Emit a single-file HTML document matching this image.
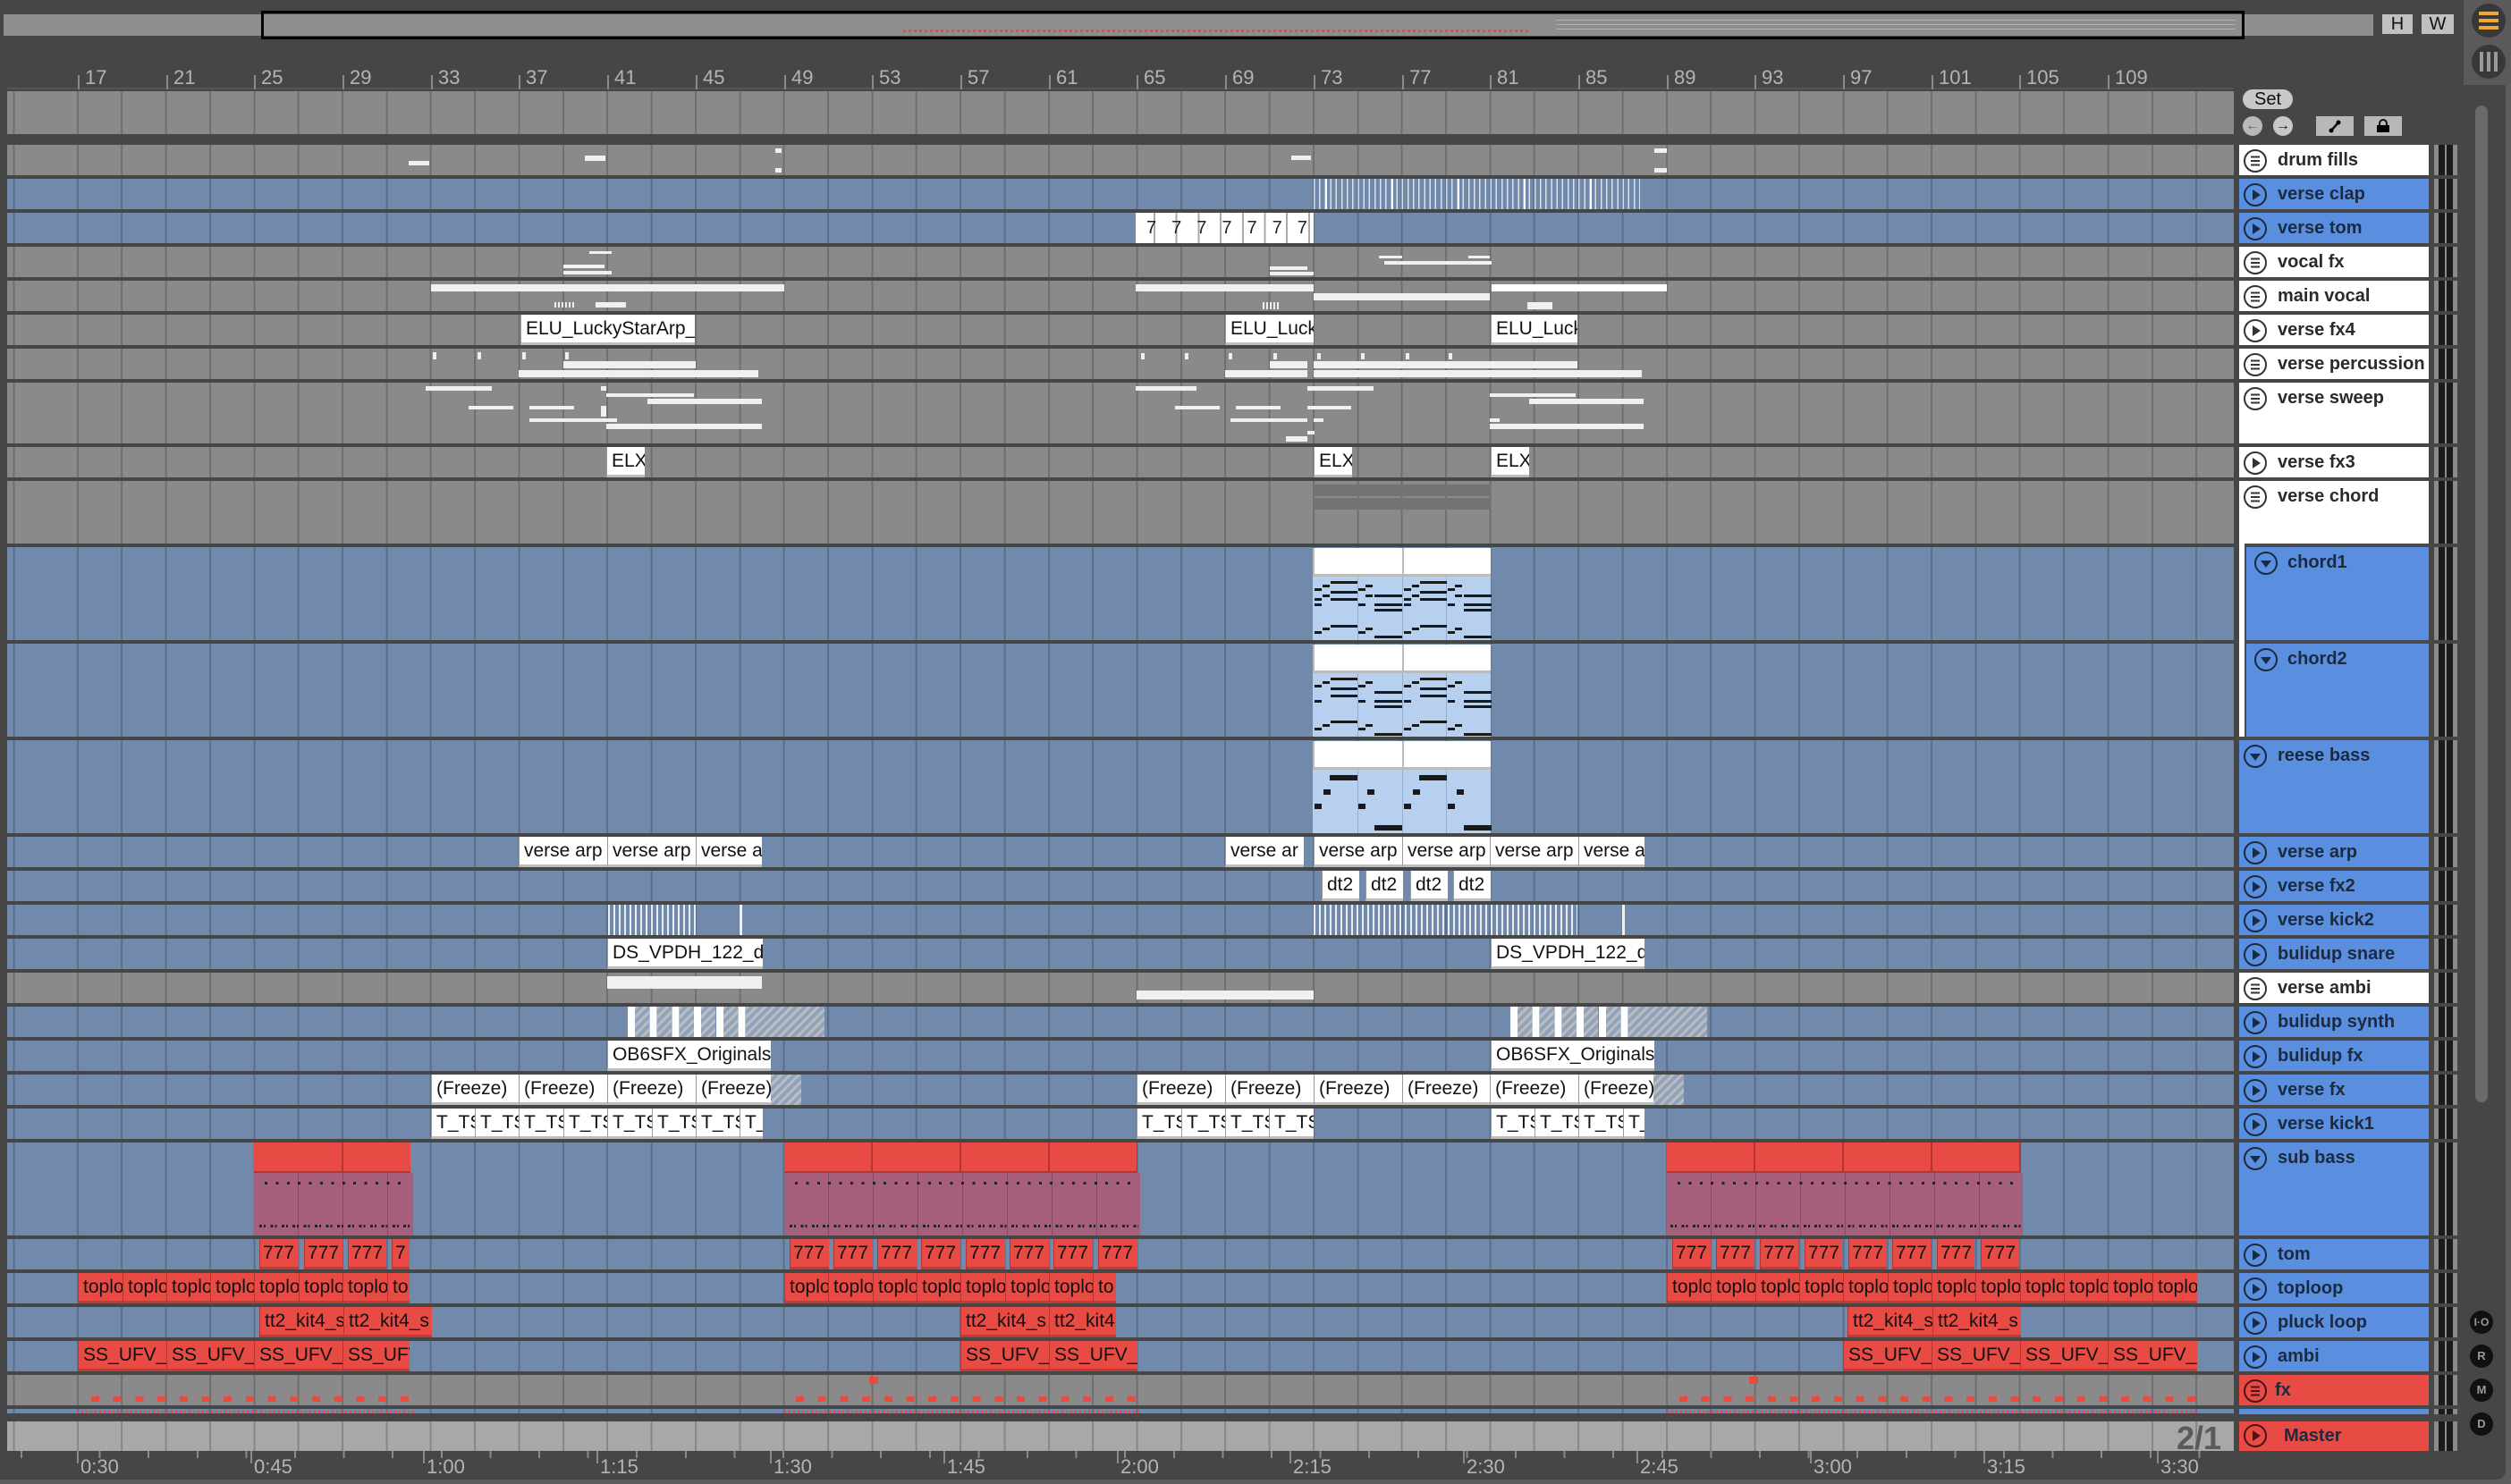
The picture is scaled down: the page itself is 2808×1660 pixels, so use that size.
<!DOCTYPE html>
<html><head><meta charset="utf-8">
<style>
*{margin:0;padding:0}
body{width:2808px;height:1660px;background:#5c5c5c;position:relative;overflow:hidden;font-family:"Liberation Sans",sans-serif}
div{position:absolute;box-sizing:border-box}
.l{left:8px;width:2490px;background-image:repeating-linear-gradient(90deg,transparent 0,transparent 47.36px,rgba(0,0,0,.2) 47.36px,rgba(0,0,0,.2) 49.36px);background-position:30.6px 0}
.g{background-color:#8a8a8a}
.b{background-color:#7189ab}
.c{overflow:hidden;white-space:nowrap;font-size:21px;color:#111;padding-left:5px;line-height:32px}
.w{background:#fff;border-left:1px solid #999;border-bottom:3px solid #bdbdbd}
.r{background:#e84a44;border-left:1px solid #b8342e;border-bottom:3px solid #c13a33}
.wb{background:#f0f0f0}
.h{left:2504px;width:212px;font-weight:bold;font-size:20px;color:#1c2a40}
.h svg{position:absolute;left:4px;top:4px}
.h span{position:absolute;left:43px;top:6px}
.hw{background:#fff;color:#2a2a2a}
.hb{background:#5a8fe0}
.hr{background:#e84a44}
.m{left:2722px;width:26px;background:#8a8a8a linear-gradient(90deg,transparent 0,transparent 5px,#1a1a1a 5px,#1a1a1a 12px,transparent 12px,transparent 14px,#1a1a1a 14px,#1a1a1a 21px,transparent 21px)}
.n{background:#1a1a1a;height:3px}
.rl{color:#b4b4b4;font-size:22px;top:74px}
.tk{width:2px;background:#8a8a8a}
.tl{color:#b4b4b4;font-size:22px;top:1628px}
.hat{background:repeating-linear-gradient(135deg,#bcbcbc 0,#bcbcbc 3px,#8fa3bf 3px,#8fa3bf 7px)}
</style></head><body>
<!-- main panel -->
<div style="left:0;top:0;width:2802px;height:1655px;background:#464646;border-radius:0 0 10px 0"></div>
<div style="left:2755px;top:0;width:53px;height:95px;background:#5a5a5a"></div>
<div style="left:2768px;top:118px;width:14px;height:1115px;background:#6a6a6a;border-radius:7px"></div>
<!-- overview bar -->
<div style="left:4px;top:16px;width:2650px;height:24px;background:#8e8e8e"></div>
<div style="left:292px;top:12px;width:2218px;height:32px;border:3px solid #000"></div>
<div style="left:1010px;top:33px;width:700px;height:3px;background:repeating-linear-gradient(90deg,#d25050 0,#d25050 3px,transparent 3px,transparent 6px)"></div>
<div style="left:1700px;top:18px;width:800px;height:18px;background:repeating-linear-gradient(180deg,transparent 0,transparent 4px,#c8c8c8 4px,#c8c8c8 5px);opacity:.6;left:1740px;width:760px"></div>
<div style="left:2664px;top:16px;width:34px;height:22px;background:#c0c0c0;font-size:20px;text-align:center;line-height:22px;color:#111">H</div>
<div style="left:2708px;top:16px;width:36px;height:22px;background:#c0c0c0;font-size:20px;text-align:center;line-height:22px;color:#111">W</div>
<div style="left:2764px;top:4px;width:38px;height:38px;border-radius:50%;background:#383838"></div>
<div style="left:2772px;top:13px;width:22px;height:4px;background:#f0a830;box-shadow:0 8px 0 #f0a830,0 16px 0 #f0a830"></div>
<div style="left:2764px;top:50px;width:38px;height:38px;border-radius:50%;background:#383838"></div>
<div style="left:2773px;top:58px;width:4px;height:22px;background:#999;box-shadow:8px 0 0 #999,16px 0 0 #999"></div>
<!-- ruler -->
<div style="left:8px;top:98px;width:2490px;height:2px;background:#555"></div>
<div class="tk" style="left:87px;top:84px;height:16px"></div><div class="rl" style="left:95px">17</div>
<div class="tk" style="left:186px;top:84px;height:16px"></div><div class="rl" style="left:194px">21</div>
<div class="tk" style="left:284px;top:84px;height:16px"></div><div class="rl" style="left:292px">25</div>
<div class="tk" style="left:383px;top:84px;height:16px"></div><div class="rl" style="left:391px">29</div>
<div class="tk" style="left:482px;top:84px;height:16px"></div><div class="rl" style="left:490px">33</div>
<div class="tk" style="left:580px;top:84px;height:16px"></div><div class="rl" style="left:588px">37</div>
<div class="tk" style="left:679px;top:84px;height:16px"></div><div class="rl" style="left:687px">41</div>
<div class="tk" style="left:778px;top:84px;height:16px"></div><div class="rl" style="left:786px">45</div>
<div class="tk" style="left:877px;top:84px;height:16px"></div><div class="rl" style="left:885px">49</div>
<div class="tk" style="left:975px;top:84px;height:16px"></div><div class="rl" style="left:983px">53</div>
<div class="tk" style="left:1074px;top:84px;height:16px"></div><div class="rl" style="left:1082px">57</div>
<div class="tk" style="left:1173px;top:84px;height:16px"></div><div class="rl" style="left:1181px">61</div>
<div class="tk" style="left:1271px;top:84px;height:16px"></div><div class="rl" style="left:1279px">65</div>
<div class="tk" style="left:1370px;top:84px;height:16px"></div><div class="rl" style="left:1378px">69</div>
<div class="tk" style="left:1469px;top:84px;height:16px"></div><div class="rl" style="left:1477px">73</div>
<div class="tk" style="left:1568px;top:84px;height:16px"></div><div class="rl" style="left:1576px">77</div>
<div class="tk" style="left:1666px;top:84px;height:16px"></div><div class="rl" style="left:1674px">81</div>
<div class="tk" style="left:1765px;top:84px;height:16px"></div><div class="rl" style="left:1773px">85</div>
<div class="tk" style="left:1864px;top:84px;height:16px"></div><div class="rl" style="left:1872px">89</div>
<div class="tk" style="left:1962px;top:84px;height:16px"></div><div class="rl" style="left:1970px">93</div>
<div class="tk" style="left:2061px;top:84px;height:16px"></div><div class="rl" style="left:2069px">97</div>
<div class="tk" style="left:2160px;top:84px;height:16px"></div><div class="rl" style="left:2168px">101</div>
<div class="tk" style="left:2258px;top:84px;height:16px"></div><div class="rl" style="left:2266px">105</div>
<div class="tk" style="left:2357px;top:84px;height:16px"></div><div class="rl" style="left:2365px">109</div>
<!-- Set/buttons -->
<div style="left:2508px;top:100px;width:56px;height:22px;border-radius:11px;background:#c8c8c8;font-size:20px;text-align:center;line-height:22px;color:#111">Set</div>
<div style="left:2508px;top:130px;width:22px;height:22px;border-radius:50%;background:#b8b8b8;color:#666;font-size:16px;text-align:center;line-height:22px;font-weight:bold">&#8592;</div>
<div style="left:2542px;top:130px;width:22px;height:22px;border-radius:50%;background:#c8c8c8;color:#111;font-size:16px;text-align:center;line-height:22px;font-weight:bold">&#8594;</div>
<div style="left:2590px;top:130px;width:42px;height:22px;background:#b8b8b8"><svg width="42" height="22"><path d="M17 16L25 7" stroke="#111" stroke-width="2.5"/><circle cx="17" cy="16" r="2.5"/><circle cx="25" cy="7" r="2.5"/></svg></div>
<div style="left:2644px;top:130px;width:42px;height:22px;background:#b8b8b8"><svg width="42" height="22"><path d="M17 10V8a4 4 0 0 1 8 0v2" stroke="#111" stroke-width="2" fill="none"/><rect x="14" y="10" width="14" height="8"/></svg></div>

<!-- lanes -->
<div class="l g" style="top:102px;height:48px"></div>
<div class="l g" style="top:162px;height:34px"></div>
<div class="l b" style="top:200px;height:34px"></div>
<div class="l b" style="top:238px;height:34px"></div>
<div class="l g" style="top:276px;height:34px"></div>
<div class="l g" style="top:314px;height:34px"></div>
<div class="l g" style="top:352px;height:34px"></div>
<div class="l g" style="top:390px;height:34px"></div>
<div class="l g" style="top:428px;height:68px"></div>
<div class="l g" style="top:500px;height:34px"></div>
<div class="l g" style="top:538px;height:70px"></div>
<div class="l b" style="top:612px;height:104px"></div>
<div class="l b" style="top:720px;height:104px"></div>
<div class="l b" style="top:828px;height:104px"></div>
<div class="l b" style="top:936px;height:34px"></div>
<div class="l b" style="top:974px;height:34px"></div>
<div class="l b" style="top:1012px;height:34px"></div>
<div class="l b" style="top:1050px;height:34px"></div>
<div class="l g" style="top:1088px;height:34px"></div>
<div class="l b" style="top:1126px;height:34px"></div>
<div class="l b" style="top:1164px;height:34px"></div>
<div class="l b" style="top:1202px;height:34px"></div>
<div class="l b" style="top:1240px;height:34px"></div>
<div class="l b" style="top:1278px;height:104px"></div>
<div class="l b" style="top:1386px;height:34px"></div>
<div class="l b" style="top:1424px;height:34px"></div>
<div class="l b" style="top:1462px;height:34px"></div>
<div class="l b" style="top:1500px;height:34px"></div>
<div class="l g" style="top:1538px;height:34px"></div>
<div class="l b" style="top:1576px;height:5px"></div>
<div class="l" style="top:1590px;height:33px;background-color:#a8a8a8"></div>
<div style="left:2434px;top:1588px;font-size:36px;font-weight:bold;color:#5a5a5a">2/1</div>

<!-- drum fills -->
<div class="wb" style="left:457px;top:180px;width:23px;height:5px"></div>
<div class="wb" style="left:654px;top:174px;width:23px;height:6px"></div>
<div class="wb" style="left:867px;top:166px;width:7px;height:5px"></div>
<div class="wb" style="left:867px;top:188px;width:7px;height:5px"></div>
<div class="wb" style="left:1444px;top:174px;width:22px;height:5px"></div>
<div class="wb" style="left:1850px;top:166px;width:14px;height:5px"></div>
<div class="wb" style="left:1850px;top:188px;width:14px;height:5px"></div>
<!-- verse clap -->
<div style="left:1469px;top:200px;width:365px;height:34px;background:repeating-linear-gradient(90deg,rgba(255,255,255,.75) 0,rgba(255,255,255,.75) 1.5px,transparent 1.5px,transparent 6.17px)"></div>
<div style="left:1482px;top:200px;width:340px;height:34px;background:repeating-linear-gradient(90deg,#fff 0,#fff 2px,transparent 2px,transparent 74px)"></div>
<!-- verse tom -->
<div style="left:1270px;top:238px;width:199px;height:34px;background:#fff repeating-linear-gradient(90deg,transparent 0,transparent 20px,#aaa 20px,#aaa 22px,transparent 22px,transparent 24.7px);font-size:20px;color:#222;line-height:34px;letter-spacing:17px;padding-left:12px;white-space:nowrap;overflow:hidden">77777777</div>
<!-- vocal fx -->
<div class="wb" style="left:659px;top:281px;width:25px;height:3px"></div>
<div class="wb" style="left:630px;top:296px;width:46px;height:4px"></div>
<div class="wb" style="left:630px;top:303px;width:54px;height:4px"></div>
<div class="wb" style="left:1420px;top:298px;width:42px;height:4px"></div>
<div class="wb" style="left:1420px;top:304px;width:49px;height:4px"></div>
<div class="wb" style="left:1542px;top:286px;width:26px;height:3px"></div>
<div class="wb" style="left:1548px;top:292px;width:120px;height:4px"></div>
<div class="wb" style="left:1642px;top:286px;width:24px;height:3px"></div>
<!-- main vocal -->
<div class="wb" style="left:482px;top:318px;width:395px;height:8px"></div>
<div style="left:620px;top:338px;width:24px;height:6px;background:repeating-linear-gradient(90deg,#eee 0,#eee 2px,transparent 2px,transparent 4px)"></div>
<div class="wb" style="left:666px;top:338px;width:34px;height:6px"></div>
<div class="wb" style="left:1270px;top:318px;width:199px;height:8px"></div>
<div class="wb" style="left:1469px;top:328px;width:197px;height:8px"></div>
<div style="left:1668px;top:318px;width:196px;height:8px;background:#fff"></div>
<div style="left:1412px;top:338px;width:20px;height:8px;background:repeating-linear-gradient(90deg,#eee 0,#eee 2px,transparent 2px,transparent 4px)"></div>
<div class="wb" style="left:1708px;top:338px;width:28px;height:8px"></div>
<!-- verse fx4 -->
<div class="c w" style="left:582px;top:352px;width:195px;height:34px">ELU_LuckyStarArp_</div>
<div class="c w" style="left:1370px;top:352px;width:99px;height:34px">ELU_Luck</div>
<div class="c w" style="left:1667px;top:352px;width:97px;height:34px">ELU_Luck</div>
<!-- verse perc -->
<div class="wb" style="left:484px;top:394px;width:4px;height:8px;box-shadow:50px 0 0 #eee,100px 0 0 #eee,148px 0 0 #eee"></div>
<div class="wb" style="left:630px;top:404px;width:148px;height:8px"></div>
<div class="wb" style="left:580px;top:414px;width:268px;height:8px"></div>
<div class="wb" style="left:1276px;top:395px;width:4px;height:7px;box-shadow:49px 0 0 #eee,98px 0 0 #eee,148px 0 0 #eee,197px 0 0 #eee,246px 0 0 #eee,296px 0 0 #eee,344px 0 0 #eee"></div>
<div class="wb" style="left:1420px;top:404px;width:42px;height:8px"></div>
<div class="wb" style="left:1469px;top:404px;width:295px;height:8px"></div>
<div class="wb" style="left:1370px;top:414px;width:92px;height:8px"></div>
<div class="wb" style="left:1469px;top:414px;width:367px;height:8px"></div>
<!-- verse sweep -->
<div class="wb" style="left:476px;top:432px;width:74px;height:5px"></div>
<div class="wb" style="left:524px;top:454px;width:50px;height:4px"></div>
<div class="wb" style="left:592px;top:454px;width:50px;height:4px"></div>
<div class="wb" style="left:592px;top:468px;width:98px;height:4px"></div>
<div class="wb" style="left:672px;top:432px;width:6px;height:5px"></div>
<div class="wb" style="left:672px;top:454px;width:6px;height:12px"></div>
<div class="wb" style="left:678px;top:440px;width:98px;height:4px"></div>
<div class="wb" style="left:724px;top:446px;width:128px;height:6px"></div>
<div class="wb" style="left:678px;top:474px;width:174px;height:6px"></div>
<div class="wb" style="left:1270px;top:432px;width:68px;height:5px"></div>
<div class="wb" style="left:1462px;top:432px;width:74px;height:5px"></div>
<div class="wb" style="left:1314px;top:454px;width:50px;height:4px"></div>
<div class="wb" style="left:1382px;top:454px;width:50px;height:4px"></div>
<div class="wb" style="left:1462px;top:454px;width:49px;height:4px"></div>
<div class="wb" style="left:1376px;top:468px;width:86px;height:4px"></div>
<div class="wb" style="left:1469px;top:468px;width:11px;height:4px"></div>
<div class="wb" style="left:1462px;top:482px;width:8px;height:4px"></div>
<div class="wb" style="left:1438px;top:488px;width:24px;height:6px"></div>
<div class="wb" style="left:1666px;top:440px;width:96px;height:4px"></div>
<div class="wb" style="left:1710px;top:446px;width:128px;height:6px"></div>
<div class="wb" style="left:1666px;top:468px;width:11px;height:4px"></div>
<div class="wb" style="left:1666px;top:474px;width:172px;height:6px"></div>
<!-- verse fx3 -->
<div class="c w" style="left:678px;top:500px;width:43px;height:34px">ELX</div>
<div class="c w" style="left:1469px;top:500px;width:43px;height:34px">ELX</div>
<div class="c w" style="left:1667px;top:500px;width:43px;height:34px">ELX</div>
<!-- verse chord -->
<div style="left:1469px;top:542px;width:198px;height:13px;background:#737373"></div>
<div style="left:1469px;top:557px;width:198px;height:13px;background:#737373"></div>
<!-- chord clips -->
<div style="left:1468px;top:613px;width:100px;height:32px;background:#fff;border-bottom:3px solid #bbb;border-left:2px solid #bbb"></div>
<div style="left:1568px;top:613px;width:99px;height:32px;background:#fff;border-bottom:3px solid #bbb;border-left:2px solid #bbb"></div>
<div style="left:1468px;top:645px;width:199px;height:71px;background:#b8d0f0 linear-gradient(90deg,transparent 0,transparent 50px,#96add0 50px,#96add0 51px,transparent 51px,transparent 100px,#96add0 100px,#96add0 101px,transparent 101px,transparent 149px,#96add0 149px,#96add0 150px,transparent 150px)"></div>
<div style="left:1468px;top:721px;width:100px;height:32px;background:#fff;border-bottom:3px solid #bbb;border-left:2px solid #bbb"></div>
<div style="left:1568px;top:721px;width:99px;height:32px;background:#fff;border-bottom:3px solid #bbb;border-left:2px solid #bbb"></div>
<div style="left:1468px;top:753px;width:199px;height:71px;background:#b8d0f0 linear-gradient(90deg,transparent 0,transparent 50px,#96add0 50px,#96add0 51px,transparent 51px,transparent 100px,#96add0 100px,#96add0 101px,transparent 101px,transparent 149px,#96add0 149px,#96add0 150px,transparent 150px)"></div>
<div style="left:1468px;top:829px;width:100px;height:32px;background:#fff;border-bottom:3px solid #bbb;border-left:2px solid #bbb"></div>
<div style="left:1568px;top:829px;width:99px;height:32px;background:#fff;border-bottom:3px solid #bbb;border-left:2px solid #bbb"></div>
<div style="left:1468px;top:861px;width:199px;height:71px;background:#b8d0f0 linear-gradient(90deg,transparent 0,transparent 50px,#96add0 50px,#96add0 51px,transparent 51px,transparent 100px,#96add0 100px,#96add0 101px,transparent 101px,transparent 149px,#96add0 149px,#96add0 150px,transparent 150px)"></div>
<!-- chord1 notes (two halves) -->
<div class="n" style="left:1488px;top:650px;width:30px;box-shadow:100px 0 0 #1a1a1a"></div>
<div class="n" style="left:1479px;top:654px;width:8px;box-shadow:100px 0 0 #1a1a1a,48px 0 0 #1a1a1a,148px 0 0 #1a1a1a"></div>
<div class="n" style="left:1470px;top:658px;width:8px;box-shadow:100px 0 0 #1a1a1a,49px 0 0 #1a1a1a,149px 0 0 #1a1a1a"></div>
<div class="n" style="left:1488px;top:661px;width:30px;box-shadow:100px 0 0 #1a1a1a"></div>
<div class="n" style="left:1479px;top:665px;width:8px;box-shadow:100px 0 0 #1a1a1a,48px 0 0 #1a1a1a,148px 0 0 #1a1a1a"></div>
<div class="n" style="left:1537px;top:665px;width:31px;box-shadow:100px 0 0 #1a1a1a"></div>
<div class="n" style="left:1488px;top:669px;width:30px;box-shadow:100px 0 0 #1a1a1a"></div>
<div class="n" style="left:1470px;top:669px;width:8px;box-shadow:100px 0 0 #1a1a1a"></div>
<div class="n" style="left:1470px;top:675px;width:8px;box-shadow:100px 0 0 #1a1a1a,49px 0 0 #1a1a1a,149px 0 0 #1a1a1a"></div>
<div class="n" style="left:1537px;top:675px;width:31px;box-shadow:100px 0 0 #1a1a1a"></div>
<div class="n" style="left:1537px;top:681px;width:31px;box-shadow:100px 0 0 #1a1a1a"></div>
<div class="n" style="left:1488px;top:699px;width:30px;box-shadow:100px 0 0 #1a1a1a"></div>
<div class="n" style="left:1479px;top:702px;width:8px;box-shadow:100px 0 0 #1a1a1a,48px 0 0 #1a1a1a,148px 0 0 #1a1a1a"></div>
<div class="n" style="left:1470px;top:706px;width:8px;box-shadow:100px 0 0 #1a1a1a,49px 0 0 #1a1a1a,149px 0 0 #1a1a1a"></div>
<div class="n" style="left:1537px;top:711px;width:31px;box-shadow:100px 0 0 #1a1a1a"></div>
<!-- chord2 notes -->
<div class="n" style="left:1488px;top:758px;width:30px;box-shadow:100px 0 0 #1a1a1a"></div>
<div class="n" style="left:1479px;top:762px;width:8px;box-shadow:100px 0 0 #1a1a1a,48px 0 0 #1a1a1a,148px 0 0 #1a1a1a"></div>
<div class="n" style="left:1470px;top:766px;width:8px;box-shadow:100px 0 0 #1a1a1a,49px 0 0 #1a1a1a,149px 0 0 #1a1a1a"></div>
<div class="n" style="left:1488px;top:769px;width:30px;box-shadow:100px 0 0 #1a1a1a"></div>
<div class="n" style="left:1537px;top:773px;width:31px;box-shadow:100px 0 0 #1a1a1a"></div>
<div class="n" style="left:1488px;top:777px;width:30px;box-shadow:100px 0 0 #1a1a1a"></div>
<div class="n" style="left:1470px;top:783px;width:8px;box-shadow:100px 0 0 #1a1a1a,49px 0 0 #1a1a1a,149px 0 0 #1a1a1a"></div>
<div class="n" style="left:1537px;top:783px;width:31px;box-shadow:100px 0 0 #1a1a1a"></div>
<div class="n" style="left:1537px;top:789px;width:31px;box-shadow:100px 0 0 #1a1a1a"></div>
<div class="n" style="left:1488px;top:806px;width:30px;box-shadow:100px 0 0 #1a1a1a"></div>
<div class="n" style="left:1479px;top:810px;width:8px;box-shadow:100px 0 0 #1a1a1a,48px 0 0 #1a1a1a,148px 0 0 #1a1a1a"></div>
<div class="n" style="left:1470px;top:814px;width:8px;box-shadow:100px 0 0 #1a1a1a,49px 0 0 #1a1a1a,149px 0 0 #1a1a1a"></div>
<div class="n" style="left:1537px;top:820px;width:31px;box-shadow:100px 0 0 #1a1a1a"></div>
<!-- reese notes -->
<div class="n" style="left:1487px;top:867px;width:31px;height:6px;box-shadow:100px 0 0 #1a1a1a"></div>
<div class="n" style="left:1480px;top:883px;width:8px;height:6px;box-shadow:100px 0 0 #1a1a1a,49px 0 0 #1a1a1a,149px 0 0 #1a1a1a"></div>
<div class="n" style="left:1470px;top:899px;width:8px;height:6px;box-shadow:100px 0 0 #1a1a1a,49px 0 0 #1a1a1a,149px 0 0 #1a1a1a"></div>
<div class="n" style="left:1537px;top:923px;width:31px;height:6px;box-shadow:100px 0 0 #1a1a1a"></div>
<!-- verse arp -->
<div class="c w" style="left:580px;top:936px;width:99px;height:34px">verse arp</div>
<div class="c w" style="left:679px;top:936px;width:99px;height:34px">verse arp</div>
<div class="c w" style="left:778px;top:936px;width:74px;height:34px">verse a</div>
<div class="c w" style="left:1370px;top:936px;width:88px;height:34px">verse ar</div>
<div class="c w" style="left:1469px;top:936px;width:99px;height:34px">verse arp</div>
<div class="c w" style="left:1568px;top:936px;width:98px;height:34px">verse arp</div>
<div class="c w" style="left:1666px;top:936px;width:99px;height:34px">verse arp</div>
<div class="c w" style="left:1765px;top:936px;width:74px;height:34px">verse a</div>
<!-- verse fx2 -->
<div class="c w" style="left:1478px;top:974px;width:42px;height:34px">dt2</div>
<div class="c w" style="left:1527px;top:974px;width:42px;height:34px">dt2</div>
<div class="c w" style="left:1577px;top:974px;width:42px;height:34px">dt2</div>
<div class="c w" style="left:1625px;top:974px;width:42px;height:34px">dt2</div>
<!-- verse kick2 -->
<div style="left:680px;top:1012px;width:100px;height:34px;background:repeating-linear-gradient(90deg,rgba(255,255,255,.85) 0,rgba(255,255,255,.85) 2px,transparent 2px,transparent 6px)"></div>
<div class="wb" style="left:827px;top:1012px;width:3px;height:34px"></div>
<div style="left:1469px;top:1012px;width:295px;height:34px;background:repeating-linear-gradient(90deg,rgba(255,255,255,.85) 0,rgba(255,255,255,.85) 2px,transparent 2px,transparent 6px)"></div>
<div class="wb" style="left:1814px;top:1012px;width:3px;height:34px"></div>
<!-- bulidup snare -->
<div class="c w" style="left:679px;top:1050px;width:174px;height:34px">DS_VPDH_122_dr</div>
<div class="c w" style="left:1667px;top:1050px;width:172px;height:34px">DS_VPDH_122_d</div>
<!-- verse ambi -->
<div class="wb" style="left:679px;top:1092px;width:173px;height:14px"></div>
<div class="wb" style="left:1271px;top:1108px;width:198px;height:10px"></div>
<!-- bulidup synth -->
<div style="left:702px;top:1126px;width:150px;height:34px;background:repeating-linear-gradient(90deg,#fff 0,#fff 8px,transparent 8px,transparent 24.7px)"></div>
<div class="hat" style="left:710px;top:1126px;width:16px;height:34px;box-shadow:none"></div>
<div class="hat" style="left:735px;top:1126px;width:16px;height:34px"></div>
<div class="hat" style="left:760px;top:1126px;width:16px;height:34px"></div>
<div class="hat" style="left:784px;top:1126px;width:16px;height:34px"></div>
<div class="hat" style="left:809px;top:1126px;width:16px;height:34px"></div>
<div class="hat" style="left:834px;top:1126px;width:88px;height:34px"></div>
<div style="left:1689px;top:1126px;width:150px;height:34px;background:repeating-linear-gradient(90deg,#fff 0,#fff 8px,transparent 8px,transparent 24.7px)"></div>
<div class="hat" style="left:1697px;top:1126px;width:16px;height:34px"></div>
<div class="hat" style="left:1722px;top:1126px;width:16px;height:34px"></div>
<div class="hat" style="left:1747px;top:1126px;width:16px;height:34px"></div>
<div class="hat" style="left:1771px;top:1126px;width:16px;height:34px"></div>
<div class="hat" style="left:1796px;top:1126px;width:16px;height:34px"></div>
<div class="hat" style="left:1821px;top:1126px;width:88px;height:34px"></div>
<!-- bulidup fx -->
<div class="c w" style="left:679px;top:1164px;width:183px;height:34px">OB6SFX_Originals_</div>
<div class="c w" style="left:1667px;top:1164px;width:183px;height:34px">OB6SFX_Originals_</div>
<!-- verse fx -->
<div class="c w" style="left:482px;top:1202px;width:98px;height:34px">(Freeze)</div>
<div class="c w" style="left:580px;top:1202px;width:99px;height:34px">(Freeze)</div>
<div class="c w" style="left:679px;top:1202px;width:99px;height:34px">(Freeze)</div>
<div class="c w" style="left:778px;top:1202px;width:84px;height:34px">(Freeze)</div>
<div class="hat" style="left:862px;top:1202px;width:34px;height:34px"></div>
<div class="c w" style="left:1271px;top:1202px;width:99px;height:34px">(Freeze)</div>
<div class="c w" style="left:1370px;top:1202px;width:99px;height:34px">(Freeze)</div>
<div class="c w" style="left:1469px;top:1202px;width:99px;height:34px">(Freeze)</div>
<div class="c w" style="left:1568px;top:1202px;width:98px;height:34px">(Freeze)</div>
<div class="c w" style="left:1666px;top:1202px;width:99px;height:34px">(Freeze)</div>
<div class="c w" style="left:1765px;top:1202px;width:84px;height:34px">(Freeze)</div>
<div class="hat" style="left:1849px;top:1202px;width:34px;height:34px"></div>
<!-- verse kick1 -->
<div class="c w" style="left:482px;top:1240px;width:49px;height:34px">T_TS</div>
<div class="c w" style="left:531px;top:1240px;width:49px;height:34px">T_TS</div>
<div class="c w" style="left:580px;top:1240px;width:50px;height:34px">T_TS</div>
<div class="c w" style="left:630px;top:1240px;width:49px;height:34px">T_TS</div>
<div class="c w" style="left:679px;top:1240px;width:50px;height:34px">T_TS</div>
<div class="c w" style="left:729px;top:1240px;width:49px;height:34px">T_TS</div>
<div class="c w" style="left:778px;top:1240px;width:49px;height:34px">T_TS</div>
<div class="c w" style="left:827px;top:1240px;width:26px;height:34px">T_</div>
<div class="c w" style="left:1271px;top:1240px;width:50px;height:34px">T_TS</div>
<div class="c w" style="left:1321px;top:1240px;width:49px;height:34px">T_TS</div>
<div class="c w" style="left:1370px;top:1240px;width:49px;height:34px">T_TS</div>
<div class="c w" style="left:1419px;top:1240px;width:50px;height:34px">T_TS</div>
<div class="c w" style="left:1667px;top:1240px;width:49px;height:34px">T_TS</div>
<div class="c w" style="left:1716px;top:1240px;width:49px;height:34px">T_TS</div>
<div class="c w" style="left:1765px;top:1240px;width:50px;height:34px">T_TS</div>
<div class="c w" style="left:1815px;top:1240px;width:24px;height:34px">T_</div>
<!-- sub bass -->
<div style="left:284px;top:1278px;width:175px;height:34px;background:#e84a44 linear-gradient(90deg,transparent 0,transparent 98px,#b8342e 98px,#b8342e 100px,transparent 100px);border-bottom:2px solid #b8342e"></div>
<div style="left:284px;top:1312px;width:178px;height:70px;background:#a65e7a;background-image:repeating-linear-gradient(90deg,transparent 0,transparent 49px,#8a4a62 49px,#8a4a62 50px)"></div>
<div style="left:296px;top:1322px;width:160px;height:3px;background:repeating-linear-gradient(90deg,#222 0,#222 3px,transparent 3px,transparent 12.4px)"></div>
<div style="left:290px;top:1370px;width:170px;height:3px;background:repeating-linear-gradient(90deg,#222 0,#222 3px,transparent 3px,transparent 5px,#222 5px,#222 7px,transparent 7px,transparent 12.4px)"></div>
<div style="left:877px;top:1278px;width:395px;height:34px;background:#e84a44 repeating-linear-gradient(90deg,transparent 0,transparent 97px,#b8342e 97px,#b8342e 99px);border-bottom:2px solid #b8342e"></div>
<div style="left:877px;top:1312px;width:398px;height:70px;background:#a65e7a;background-image:repeating-linear-gradient(90deg,transparent 0,transparent 49px,#8a4a62 49px,#8a4a62 50px)"></div>
<div style="left:889px;top:1322px;width:380px;height:3px;background:repeating-linear-gradient(90deg,#222 0,#222 3px,transparent 3px,transparent 12.4px)"></div>
<div style="left:883px;top:1370px;width:390px;height:3px;background:repeating-linear-gradient(90deg,#222 0,#222 3px,transparent 3px,transparent 5px,#222 5px,#222 7px,transparent 7px,transparent 12.4px)"></div>
<div style="left:1864px;top:1278px;width:396px;height:34px;background:#e84a44 repeating-linear-gradient(90deg,transparent 0,transparent 97px,#b8342e 97px,#b8342e 99px);border-bottom:2px solid #b8342e"></div>
<div style="left:1864px;top:1312px;width:398px;height:70px;background:#a65e7a;background-image:repeating-linear-gradient(90deg,transparent 0,transparent 49px,#8a4a62 49px,#8a4a62 50px)"></div>
<div style="left:1876px;top:1322px;width:380px;height:3px;background:repeating-linear-gradient(90deg,#222 0,#222 3px,transparent 3px,transparent 12.4px)"></div>
<div style="left:1868px;top:1370px;width:392px;height:3px;background:repeating-linear-gradient(90deg,#222 0,#222 3px,transparent 3px,transparent 5px,#222 5px,#222 7px,transparent 7px,transparent 12.4px)"></div>
<!-- tom -->
<div class="c r" style="left:290px;top:1386px;width:44px;height:34px;padding-left:3px">777</div>
<div class="c r" style="left:340px;top:1386px;width:43px;height:34px;padding-left:3px">777</div>
<div class="c r" style="left:389px;top:1386px;width:43px;height:34px;padding-left:3px">777</div>
<div class="c r" style="left:438px;top:1386px;width:20px;height:34px;padding-left:3px">7</div>
<div class="c r" style="left:883px;top:1386px;width:44px;height:34px;padding-left:3px">777</div>
<div class="c r" style="left:932px;top:1386px;width:44px;height:34px;padding-left:3px">777</div>
<div class="c r" style="left:981px;top:1386px;width:44px;height:34px;padding-left:3px">777</div>
<div class="c r" style="left:1030px;top:1386px;width:44px;height:34px;padding-left:3px">777</div>
<div class="c r" style="left:1080px;top:1386px;width:44px;height:34px;padding-left:3px">777</div>
<div class="c r" style="left:1129px;top:1386px;width:44px;height:34px;padding-left:3px">777</div>
<div class="c r" style="left:1178px;top:1386px;width:44px;height:34px;padding-left:3px">777</div>
<div class="c r" style="left:1228px;top:1386px;width:44px;height:34px;padding-left:3px">777</div>
<div class="c r" style="left:1870px;top:1386px;width:43px;height:34px;padding-left:3px">777</div>
<div class="c r" style="left:1919px;top:1386px;width:43px;height:34px;padding-left:3px">777</div>
<div class="c r" style="left:1968px;top:1386px;width:43px;height:34px;padding-left:3px">777</div>
<div class="c r" style="left:2018px;top:1386px;width:42px;height:34px;padding-left:3px">777</div>
<div class="c r" style="left:2067px;top:1386px;width:43px;height:34px;padding-left:3px">777</div>
<div class="c r" style="left:2116px;top:1386px;width:43px;height:34px;padding-left:3px">777</div>
<div class="c r" style="left:2166px;top:1386px;width:42px;height:34px;padding-left:3px">777</div>
<div class="c r" style="left:2215px;top:1386px;width:43px;height:34px;padding-left:3px">777</div>
<!-- toploop -->
<div class="c r" style="left:87px;top:1424px;width:50px;height:34px">toploop</div>
<div class="c r" style="left:137px;top:1424px;width:49px;height:34px">toploop</div>
<div class="c r" style="left:186px;top:1424px;width:49px;height:34px">toploop</div>
<div class="c r" style="left:235px;top:1424px;width:49px;height:34px">toploop</div>
<div class="c r" style="left:284px;top:1424px;width:50px;height:34px">toploop</div>
<div class="c r" style="left:334px;top:1424px;width:49px;height:34px">toploop</div>
<div class="c r" style="left:383px;top:1424px;width:50px;height:34px">toploop</div>
<div class="c r" style="left:433px;top:1424px;width:25px;height:34px">to</div>
<div class="c r" style="left:877px;top:1424px;width:49px;height:34px">toploop</div>
<div class="c r" style="left:926px;top:1424px;width:50px;height:34px">toploop</div>
<div class="c r" style="left:976px;top:1424px;width:49px;height:34px">toploop</div>
<div class="c r" style="left:1025px;top:1424px;width:49px;height:34px">toploop</div>
<div class="c r" style="left:1074px;top:1424px;width:50px;height:34px">toploop</div>
<div class="c r" style="left:1124px;top:1424px;width:49px;height:34px">toploop</div>
<div class="c r" style="left:1173px;top:1424px;width:49px;height:34px">toploop</div>
<div class="c r" style="left:1222px;top:1424px;width:26px;height:34px">to</div>
<div class="c r" style="left:1864px;top:1424px;width:49px;height:34px">toploop</div>
<div class="c r" style="left:1913px;top:1424px;width:50px;height:34px">toploop</div>
<div class="c r" style="left:1963px;top:1424px;width:49px;height:34px">toploop</div>
<div class="c r" style="left:2012px;top:1424px;width:49px;height:34px">toploop</div>
<div class="c r" style="left:2061px;top:1424px;width:50px;height:34px">toploop</div>
<div class="c r" style="left:2111px;top:1424px;width:49px;height:34px">toploop</div>
<div class="c r" style="left:2160px;top:1424px;width:49px;height:34px">toploop</div>
<div class="c r" style="left:2209px;top:1424px;width:50px;height:34px">toploop</div>
<div class="c r" style="left:2259px;top:1424px;width:49px;height:34px">toploop</div>
<div class="c r" style="left:2308px;top:1424px;width:49px;height:34px">toploop</div>
<div class="c r" style="left:2357px;top:1424px;width:50px;height:34px">toploop</div>
<div class="c r" style="left:2407px;top:1424px;width:50px;height:34px">toploop</div>
<!-- pluck loop -->
<div class="c r" style="left:290px;top:1462px;width:94px;height:34px">tt2_kit4_s</div>
<div class="c r" style="left:384px;top:1462px;width:99px;height:34px">tt2_kit4_s</div>
<div class="c r" style="left:1074px;top:1462px;width:99px;height:34px">tt2_kit4_s</div>
<div class="c r" style="left:1173px;top:1462px;width:75px;height:34px">tt2_kit4</div>
<div class="c r" style="left:2066px;top:1462px;width:95px;height:34px">tt2_kit4_s</div>
<div class="c r" style="left:2161px;top:1462px;width:99px;height:34px">tt2_kit4_s</div>
<!-- ambi -->
<div class="c r" style="left:87px;top:1500px;width:99px;height:34px">SS_UFV_1</div>
<div class="c r" style="left:186px;top:1500px;width:98px;height:34px">SS_UFV_1</div>
<div class="c r" style="left:284px;top:1500px;width:99px;height:34px">SS_UFV_1</div>
<div class="c r" style="left:383px;top:1500px;width:75px;height:34px">SS_UFV</div>
<div class="c r" style="left:1074px;top:1500px;width:99px;height:34px">SS_UFV_1</div>
<div class="c r" style="left:1173px;top:1500px;width:99px;height:34px">SS_UFV_1</div>
<div class="c r" style="left:2061px;top:1500px;width:99px;height:34px">SS_UFV_1</div>
<div class="c r" style="left:2160px;top:1500px;width:99px;height:34px">SS_UFV_1</div>
<div class="c r" style="left:2259px;top:1500px;width:98px;height:34px">SS_UFV_1</div>
<div class="c r" style="left:2357px;top:1500px;width:100px;height:34px">SS_UFV_1</div>
<!-- fx automation -->
<div style="left:102px;top:1562px;width:360px;height:6px;background:repeating-linear-gradient(90deg,#e84a44 0,#e84a44 9px,transparent 9px,transparent 24.7px)"></div>
<div style="left:890px;top:1562px;width:382px;height:6px;background:repeating-linear-gradient(90deg,#e84a44 0,#e84a44 9px,transparent 9px,transparent 24.7px)"></div>
<div style="left:1878px;top:1562px;width:580px;height:6px;background:repeating-linear-gradient(90deg,#e84a44 0,#e84a44 9px,transparent 9px,transparent 24.7px)"></div>
<div style="left:972px;top:1540px;width:10px;height:8px;background:#e84a44"></div>
<div style="left:1956px;top:1540px;width:10px;height:8px;background:#e84a44"></div>
<div style="left:86px;top:1577px;width:380px;height:4px;background:repeating-linear-gradient(90deg,#e84a44 0,#e84a44 2px,transparent 2px,transparent 5px)"></div>
<div style="left:877px;top:1577px;width:400px;height:4px;background:repeating-linear-gradient(90deg,#e84a44 0,#e84a44 2px,transparent 2px,transparent 5px)"></div>
<div style="left:1864px;top:1577px;width:594px;height:4px;background:repeating-linear-gradient(90deg,#e84a44 0,#e84a44 2px,transparent 2px,transparent 5px)"></div>
<!-- time ruler -->
<div style="left:8px;top:1623px;width:2490px;height:8px;background:repeating-linear-gradient(90deg,transparent 0,transparent 52.6px,#8a8a8a 52.6px,#8a8a8a 54.6px);background-position:50px 0"></div>
<div class="tk" style="left:86px;top:1623px;height:14px"></div><div class="tl" style="left:90px">0:30</div>
<div class="tk" style="left:280px;top:1623px;height:14px"></div><div class="tl" style="left:284px">0:45</div>
<div class="tk" style="left:473px;top:1623px;height:14px"></div><div class="tl" style="left:477px">1:00</div>
<div class="tk" style="left:667px;top:1623px;height:14px"></div><div class="tl" style="left:671px">1:15</div>
<div class="tk" style="left:861px;top:1623px;height:14px"></div><div class="tl" style="left:865px">1:30</div>
<div class="tk" style="left:1055px;top:1623px;height:14px"></div><div class="tl" style="left:1059px">1:45</div>
<div class="tk" style="left:1249px;top:1623px;height:14px"></div><div class="tl" style="left:1253px">2:00</div>
<div class="tk" style="left:1442px;top:1623px;height:14px"></div><div class="tl" style="left:1446px">2:15</div>
<div class="tk" style="left:1636px;top:1623px;height:14px"></div><div class="tl" style="left:1640px">2:30</div>
<div class="tk" style="left:1830px;top:1623px;height:14px"></div><div class="tl" style="left:1834px">2:45</div>
<div class="tk" style="left:2024px;top:1623px;height:14px"></div><div class="tl" style="left:2028px">3:00</div>
<div class="tk" style="left:2218px;top:1623px;height:14px"></div><div class="tl" style="left:2222px">3:15</div>
<div class="tk" style="left:2412px;top:1623px;height:14px"></div><div class="tl" style="left:2416px">3:30</div>

<!-- headers -->
<div class="h hw" style="top:162px;height:34px"><svg width="28" height="28"><circle cx="14" cy="14" r="12" fill="none" stroke="#333" stroke-width="2"/><path d="M9 9.5h10M9 14h10M9 18.5h10" stroke="#333" stroke-width="2"/></svg><span>drum fills</span></div>
<div class="h hb" style="top:200px;height:34px"><svg width="28" height="28"><circle cx="14" cy="14" r="12" fill="none" stroke="#1c2a40" stroke-width="2"/><path d="M11 8l9 6-9 6z" fill="#1c2a40"/></svg><span>verse clap</span></div>
<div class="h hb" style="top:238px;height:34px"><svg width="28" height="28"><circle cx="14" cy="14" r="12" fill="none" stroke="#1c2a40" stroke-width="2"/><path d="M11 8l9 6-9 6z" fill="#1c2a40"/></svg><span>verse tom</span></div>
<div class="h hw" style="top:276px;height:34px"><svg width="28" height="28"><circle cx="14" cy="14" r="12" fill="none" stroke="#333" stroke-width="2"/><path d="M9 9.5h10M9 14h10M9 18.5h10" stroke="#333" stroke-width="2"/></svg><span>vocal fx</span></div>
<div class="h hw" style="top:314px;height:34px"><svg width="28" height="28"><circle cx="14" cy="14" r="12" fill="none" stroke="#333" stroke-width="2"/><path d="M9 9.5h10M9 14h10M9 18.5h10" stroke="#333" stroke-width="2"/></svg><span>main vocal</span></div>
<div class="h hw" style="top:352px;height:34px"><svg width="28" height="28"><circle cx="14" cy="14" r="12" fill="none" stroke="#333" stroke-width="2"/><path d="M11 8l9 6-9 6z" fill="#333"/></svg><span>verse fx4</span></div>
<div class="h hw" style="top:390px;height:34px"><svg width="28" height="28"><circle cx="14" cy="14" r="12" fill="none" stroke="#333" stroke-width="2"/><path d="M9 9.5h10M9 14h10M9 18.5h10" stroke="#333" stroke-width="2"/></svg><span>verse percussion</span></div>
<div class="h hw" style="top:428px;height:68px"><svg width="28" height="28"><circle cx="14" cy="14" r="12" fill="none" stroke="#333" stroke-width="2"/><path d="M9 9.5h10M9 14h10M9 18.5h10" stroke="#333" stroke-width="2"/></svg><span>verse sweep</span></div>
<div class="h hw" style="top:500px;height:34px"><svg width="28" height="28"><circle cx="14" cy="14" r="12" fill="none" stroke="#333" stroke-width="2"/><path d="M11 8l9 6-9 6z" fill="#333"/></svg><span>verse fx3</span></div>
<div class="h hw" style="top:538px;height:394px"><svg width="28" height="28"><circle cx="14" cy="14" r="12" fill="none" stroke="#333" stroke-width="2"/><path d="M9 9.5h10M9 14h10M9 18.5h10" stroke="#333" stroke-width="2"/></svg><span>verse chord</span></div>
<div style="left:2510px;top:608px;width:208px;height:4px;background:#4a4a4a"></div>
<div class="h hb" style="left:2510px;width:206px;top:612px;height:104px;border-left:2px solid #4a4a4a"><svg width="28" height="28" style="left:8px"><circle cx="14" cy="14" r="12" fill="none" stroke="#1c2a40" stroke-width="2"/><path d="M8 11h12l-6 8z" fill="#1c2a40"/></svg><span style="left:46px">chord1</span></div>
<div style="left:2510px;top:716px;width:208px;height:4px;background:#4a4a4a"></div>
<div class="h hb" style="left:2510px;width:206px;top:720px;height:104px;border-left:2px solid #4a4a4a"><svg width="28" height="28" style="left:8px"><circle cx="14" cy="14" r="12" fill="none" stroke="#1c2a40" stroke-width="2"/><path d="M8 11h12l-6 8z" fill="#1c2a40"/></svg><span style="left:46px">chord2</span></div>
<div style="left:2502px;top:824px;width:216px;height:4px;background:#4a4a4a"></div>
<div class="h hb" style="top:828px;height:104px"><svg width="28" height="28"><circle cx="14" cy="14" r="12" fill="none" stroke="#1c2a40" stroke-width="2"/><path d="M8 11h12l-6 8z" fill="#1c2a40"/></svg><span>reese bass</span></div>
<div class="h hb" style="top:936px;height:34px"><svg width="28" height="28"><circle cx="14" cy="14" r="12" fill="none" stroke="#1c2a40" stroke-width="2"/><path d="M11 8l9 6-9 6z" fill="#1c2a40"/></svg><span>verse arp</span></div>
<div class="h hb" style="top:974px;height:34px"><svg width="28" height="28"><circle cx="14" cy="14" r="12" fill="none" stroke="#1c2a40" stroke-width="2"/><path d="M11 8l9 6-9 6z" fill="#1c2a40"/></svg><span>verse fx2</span></div>
<div class="h hb" style="top:1012px;height:34px"><svg width="28" height="28"><circle cx="14" cy="14" r="12" fill="none" stroke="#1c2a40" stroke-width="2"/><path d="M11 8l9 6-9 6z" fill="#1c2a40"/></svg><span>verse kick2</span></div>
<div class="h hb" style="top:1050px;height:34px"><svg width="28" height="28"><circle cx="14" cy="14" r="12" fill="none" stroke="#1c2a40" stroke-width="2"/><path d="M11 8l9 6-9 6z" fill="#1c2a40"/></svg><span>bulidup snare</span></div>
<div class="h hw" style="top:1088px;height:34px"><svg width="28" height="28"><circle cx="14" cy="14" r="12" fill="none" stroke="#333" stroke-width="2"/><path d="M9 9.5h10M9 14h10M9 18.5h10" stroke="#333" stroke-width="2"/></svg><span>verse ambi</span></div>
<div class="h hb" style="top:1126px;height:34px"><svg width="28" height="28"><circle cx="14" cy="14" r="12" fill="none" stroke="#1c2a40" stroke-width="2"/><path d="M11 8l9 6-9 6z" fill="#1c2a40"/></svg><span>bulidup synth</span></div>
<div class="h hb" style="top:1164px;height:34px"><svg width="28" height="28"><circle cx="14" cy="14" r="12" fill="none" stroke="#1c2a40" stroke-width="2"/><path d="M11 8l9 6-9 6z" fill="#1c2a40"/></svg><span>bulidup fx</span></div>
<div class="h hb" style="top:1202px;height:34px"><svg width="28" height="28"><circle cx="14" cy="14" r="12" fill="none" stroke="#1c2a40" stroke-width="2"/><path d="M11 8l9 6-9 6z" fill="#1c2a40"/></svg><span>verse fx</span></div>
<div class="h hb" style="top:1240px;height:34px"><svg width="28" height="28"><circle cx="14" cy="14" r="12" fill="none" stroke="#1c2a40" stroke-width="2"/><path d="M11 8l9 6-9 6z" fill="#1c2a40"/></svg><span>verse kick1</span></div>
<div class="h hb" style="top:1278px;height:104px"><svg width="28" height="28"><circle cx="14" cy="14" r="12" fill="none" stroke="#1c2a40" stroke-width="2"/><path d="M8 11h12l-6 8z" fill="#1c2a40"/></svg><span>sub bass</span></div>
<div class="h hb" style="top:1386px;height:34px"><svg width="28" height="28"><circle cx="14" cy="14" r="12" fill="none" stroke="#1c2a40" stroke-width="2"/><path d="M11 8l9 6-9 6z" fill="#1c2a40"/></svg><span>tom</span></div>
<div class="h hb" style="top:1424px;height:34px"><svg width="28" height="28"><circle cx="14" cy="14" r="12" fill="none" stroke="#1c2a40" stroke-width="2"/><path d="M11 8l9 6-9 6z" fill="#1c2a40"/></svg><span>toploop</span></div>
<div class="h hb" style="top:1462px;height:34px"><svg width="28" height="28"><circle cx="14" cy="14" r="12" fill="none" stroke="#1c2a40" stroke-width="2"/><path d="M11 8l9 6-9 6z" fill="#1c2a40"/></svg><span>pluck loop</span></div>
<div class="h hb" style="top:1500px;height:34px"><svg width="28" height="28"><circle cx="14" cy="14" r="12" fill="none" stroke="#1c2a40" stroke-width="2"/><path d="M11 8l9 6-9 6z" fill="#1c2a40"/></svg><span>ambi</span></div>
<div class="h hr" style="top:1538px;height:34px"><svg width="28" height="28"><circle cx="14" cy="14" r="12" fill="none" stroke="#4a1414" stroke-width="2"/><path d="M9 9.5h10M9 14h10M9 18.5h10" stroke="#4a1414" stroke-width="2"/></svg><span style="left:40px">fx</span></div>
<div class="h hb" style="top:1576px;height:6px"></div>
<div class="h hr" style="top:1590px;height:33px"><svg width="28" height="28" style="top:2px"><circle cx="14" cy="14" r="12" fill="none" stroke="#4a1414" stroke-width="2"/><path d="M11 8l9 6-9 6z" fill="#4a1414"/></svg><span style="left:50px;top:5px">Master</span></div>

<!-- meters -->
<div class="m" style="top:162px;height:34px"></div>
<div class="m" style="top:200px;height:34px"></div>
<div class="m" style="top:238px;height:34px"></div>
<div class="m" style="top:276px;height:34px"></div>
<div class="m" style="top:314px;height:34px"></div>
<div class="m" style="top:352px;height:34px"></div>
<div class="m" style="top:390px;height:34px"></div>
<div class="m" style="top:428px;height:68px"></div>
<div class="m" style="top:500px;height:34px"></div>
<div class="m" style="top:538px;height:70px"></div>
<div class="m" style="top:612px;height:104px"></div>
<div class="m" style="top:720px;height:104px"></div>
<div class="m" style="top:828px;height:104px"></div>
<div class="m" style="top:936px;height:34px"></div>
<div class="m" style="top:974px;height:34px"></div>
<div class="m" style="top:1012px;height:34px"></div>
<div class="m" style="top:1050px;height:34px"></div>
<div class="m" style="top:1088px;height:34px"></div>
<div class="m" style="top:1126px;height:34px"></div>
<div class="m" style="top:1164px;height:34px"></div>
<div class="m" style="top:1202px;height:34px"></div>
<div class="m" style="top:1240px;height:34px"></div>
<div class="m" style="top:1278px;height:104px"></div>
<div class="m" style="top:1386px;height:34px"></div>
<div class="m" style="top:1424px;height:34px"></div>
<div class="m" style="top:1462px;height:34px"></div>
<div class="m" style="top:1500px;height:34px"></div>
<div class="m" style="top:1538px;height:34px"></div>
<div class="m" style="top:1576px;height:6px"></div>
<div class="m" style="top:1590px;height:33px"></div>
<!-- bottom right circle buttons -->
<div style="left:2762px;top:1466px;width:26px;height:26px;border-radius:50%;background:#111;color:#999;font-size:12px;text-align:center;line-height:26px;font-weight:bold">I·O</div>
<div style="left:2762px;top:1504px;width:26px;height:26px;border-radius:50%;background:#111;color:#999;font-size:13px;text-align:center;line-height:26px;font-weight:bold">R</div>
<div style="left:2762px;top:1542px;width:26px;height:26px;border-radius:50%;background:#111;color:#999;font-size:13px;text-align:center;line-height:26px;font-weight:bold">M</div>
<div style="left:2762px;top:1580px;width:26px;height:26px;border-radius:50%;background:#111;color:#999;font-size:13px;text-align:center;line-height:26px;font-weight:bold">D</div>
</body></html>
